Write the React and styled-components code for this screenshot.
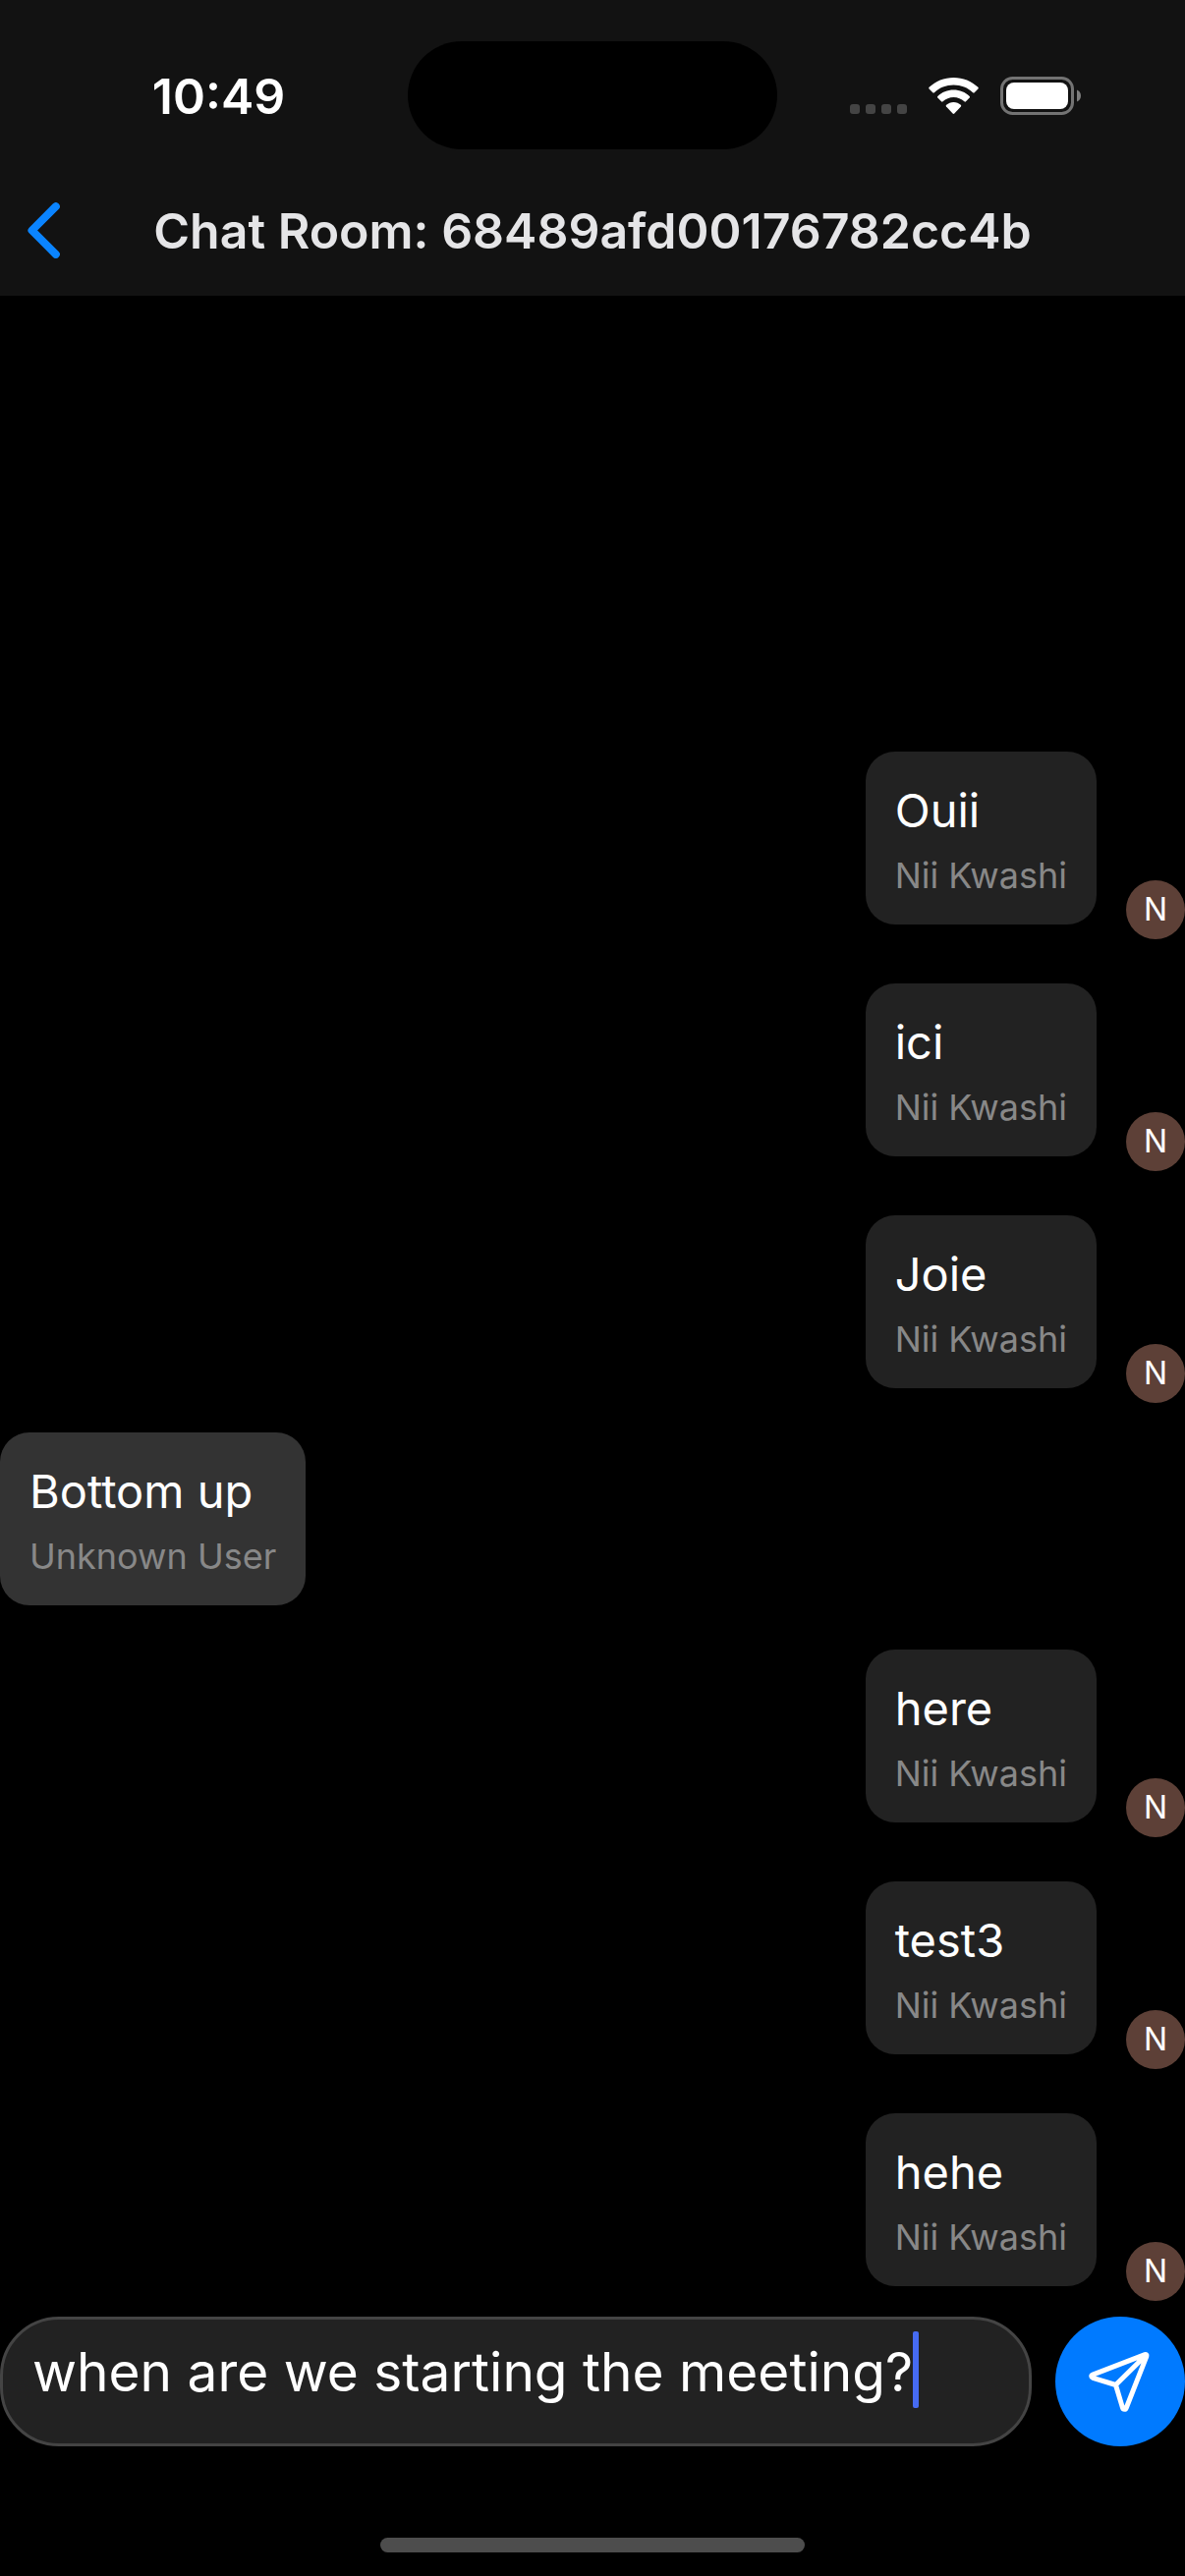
import React, { useState } from "react";
import styled, { createGlobalStyle } from "styled-components";

const GlobalStyle = createGlobalStyle`
  *, *::before, *::after { box-sizing: border-box; }
  body {
    margin: 0;
    background: #000;
    color: #fff;
    font-family: Inter, "Liberation Sans", sans-serif;
  }
`;

const Screen = styled.div`
  display: flex;
  flex-direction: column;
  min-height: 100vh;
`;

const Header = styled.header`
  background: #121212;
`;

const StatusBar = styled.div`
  display: grid;
  grid-template-columns: 1fr 376px 1fr;
  align-items: center;
  padding-top: 42px;
`;

const Time = styled.time`
  padding: 2px 0 0 30px;
  text-align: center;
  font-size: 50px;
  line-height: 62px;
  font-weight: 600;
`;

const Island = styled.div`
  height: 110px;
  border-radius: 55px;
  background: #000;
`;

const StatusIcons = styled.div`
  display: flex;
  align-items: center;
  justify-content: flex-end;
  gap: 22px;
  padding-right: 106px;
`;

const SignalDots = styled.div`
  display: flex;
  align-self: flex-end;
  gap: 6px;
  padding-bottom: 1px;
`;

const SignalDot = styled.span`
  width: 10px;
  height: 10px;
  border-radius: 3px;
  background: #444;
`;

const NavBar = styled.nav`
  display: grid;
  grid-template-columns: 120px 1fr 120px;
  grid-template-rows: 100%;
  align-items: center;
  height: 149px;
  padding-top: 16px;
`;

const BackButton = styled.button`
  display: flex;
  align-items: center;
  height: 100%;
  padding: 0 0 0 28px;
  border: 0;
  background: none;
  color: #0a84ff;
`;

const Title = styled.h1`
  margin: 0;
  text-align: center;
  white-space: nowrap;
  font-size: 50px;
  line-height: 62px;
  font-weight: 600;
  color: #e5e5e7;
`;

const Messages = styled.ul`
  flex: 1;
  display: flex;
  flex-direction: column;
  justify-content: flex-end;
  gap: 30px;
  margin: 0;
  padding: 0 0 16px;
  list-style: none;
`;

const Message = styled.li`
  display: flex;
  align-items: flex-end;
  justify-content: ${(p) => (p.$own ? "flex-end" : "flex-start")};
  gap: 30px;
`;

const Bubble = styled.div`
  margin: ${(p) => (p.$own ? "15px 0" : "0")};
  padding: 30px 30px 28px;
  border-radius: 30px;
  background: ${(p) => (p.$own ? "#222" : "#333")};
`;

const MessageText = styled.p`
  margin: 0;
  font-size: 47px;
  line-height: 60px;
`;

const Sender = styled.p`
  margin: 15px 0 0;
  font-size: 36px;
  line-height: 43px;
  color: #888;
`;

const Avatar = styled.span`
  display: flex;
  align-items: center;
  justify-content: center;
  width: 60px;
  height: 60px;
  border-radius: 50%;
  background: #5d4037;
  font-size: 32px;
  line-height: 40px;
`;

const Composer = styled.form`
  display: flex;
  gap: 24px;
`;

const Field = styled.label`
  flex: 1;
  display: flex;
  min-width: 0;
  height: 132px;
  padding: 12px 30px;
  border: 3px solid #444;
  border-radius: 60px;
  background: #222;
`;

const TextInput = styled.input`
  field-sizing: content;
  min-width: 0;
  height: 78px;
  padding: 4px 0 0;
  border: 0;
  outline: 0;
  background: none;
  color: #fff;
  font-family: inherit;
  font-size: 55px;
  line-height: 74px;
`;

const Caret = styled.span`
  flex: none;
  width: 6px;
  height: 78px;
  border-radius: 2px;
  background: #466bf2;
`;

const SendButton = styled.button`
  display: flex;
  align-items: center;
  justify-content: center;
  width: 132px;
  height: 132px;
  padding: 0;
  border: 0;
  border-radius: 50%;
  background: #007aff;
  color: #fff;
`;

const HomeIndicator = styled.div`
  width: 432px;
  height: 15px;
  margin: 93px auto 24px;
  border-radius: 8px;
  background: #4d4d4d;
`;

const messages = [
  { id: 1, text: "Ouii", sender: "Nii Kwashi", own: true },
  { id: 2, text: "ici", sender: "Nii Kwashi", own: true },
  { id: 3, text: "Joie", sender: "Nii Kwashi", own: true },
  { id: 4, text: "Bottom up", sender: "Unknown User", own: false },
  { id: 5, text: "here", sender: "Nii Kwashi", own: true },
  { id: 6, text: "test3", sender: "Nii Kwashi", own: true },
  { id: 7, text: "hehe", sender: "Nii Kwashi", own: true },
];

const WifiIcon = () => (
  <svg width="51" height="37" viewBox="0 0 51 37" fill="#fff" aria-hidden="true">
    <path d="M25.5 0C35.1 0 43.9 3.7 50.4 9.8c.5.5.5 1.2 0 1.7l-3.7 3.7c-.4.4-1.1.4-1.6 0C40 10.4 33.1 7.6 25.5 7.6S11 10.4 5.9 15.2c-.5.4-1.2.4-1.6 0L.6 11.5c-.5-.5-.5-1.2 0-1.7C7.1 3.7 15.9 0 25.5 0z" />
    <path d="M25.5 12.6c6.2 0 11.9 2.4 16.2 6.3.5.5.5 1.2 0 1.7l-3.7 3.7c-.4.4-1.1.5-1.6 0-2.9-2.6-6.7-4.2-10.9-4.2s-8 1.6-10.9 4.2c-.5.5-1.2.4-1.6 0l-3.7-3.7c-.5-.5-.5-1.2 0-1.7 4.3-3.9 10-6.3 16.2-6.3z" />
    <path d="M25.5 25c2.8 0 5.4 1.1 7.3 2.8.5.5.5 1.2.1 1.7l-6.6 7c-.5.5-1.2.5-1.7 0l-6.6-7c-.4-.5-.4-1.2.1-1.7C20.1 26.1 22.7 25 25.5 25z" />
  </svg>
);

const BatteryIcon = () => (
  <svg width="82" height="39" viewBox="0 0 82 39" aria-hidden="true">
    <rect x="1.5" y="1.5" width="72" height="36" rx="11" fill="none" stroke="#737373" strokeWidth="3" />
    <rect x="6" y="6" width="63" height="27" rx="8" fill="#fff" />
    <path d="M78 13.5c2.5 1 4 3.3 4 6s-1.5 5-4 6z" fill="#7d7d7d" />
  </svg>
);

const BackIcon = () => (
  <svg width="33" height="57" viewBox="0 0 33 57" fill="none" aria-hidden="true">
    <path d="M28.8 4.2 4.5 28.5l24.3 24.3" stroke="currentColor" strokeWidth="8" strokeLinecap="round" strokeLinejoin="round" />
  </svg>
);

const SendIcon = () => (
  <svg width="64" height="64" viewBox="0 0 64 64" fill="none" aria-hidden="true">
    <path
      d="M57.2 4.6 4 25.2c-1.7.7-1.6 2.5.2 3.100L27.500 35.500l7 23.400c.6 1.900 3 1.900 3.700.1L58.900 6.300c.4-1.200-.5-2.100-1.700-1.700zM27.500 35.500 58.200 5.200"
      stroke="currentColor"
      strokeWidth="5"
      strokeLinejoin="round"
    />
  </svg>
);

export default function App() {
  const [draft, setDraft] = useState("when are we starting the meeting?");

  return (
    <Screen>
      <GlobalStyle />
      <Header>
        <StatusBar>
          <Time>10:49</Time>
          <Island />
          <StatusIcons>
            <SignalDots>
              <SignalDot />
              <SignalDot />
              <SignalDot />
              <SignalDot />
            </SignalDots>
            <WifiIcon />
            <BatteryIcon />
          </StatusIcons>
        </StatusBar>
        <NavBar>
          <BackButton type="button" aria-label="Back">
            <BackIcon />
          </BackButton>
          <Title>Chat Room: 68489afd00176782cc4b</Title>
        </NavBar>
      </Header>
      <Messages>
        {messages.map((m) => (
          <Message key={m.id} $own={m.own}>
            <Bubble $own={m.own}>
              <MessageText>{m.text}</MessageText>
              <Sender>{m.sender}</Sender>
            </Bubble>
            {m.own && <Avatar>{m.sender[0]}</Avatar>}
          </Message>
        ))}
      </Messages>
      <Composer onSubmit={(e) => e.preventDefault()}>
        <Field>
          <TextInput
            type="text"
            aria-label="Message"
            value={draft}
            onChange={(e) => setDraft(e.target.value)}
          />
          <Caret />
        </Field>
        <SendButton type="submit" aria-label="Send">
          <SendIcon />
        </SendButton>
      </Composer>
      <HomeIndicator />
    </Screen>
  );
}
